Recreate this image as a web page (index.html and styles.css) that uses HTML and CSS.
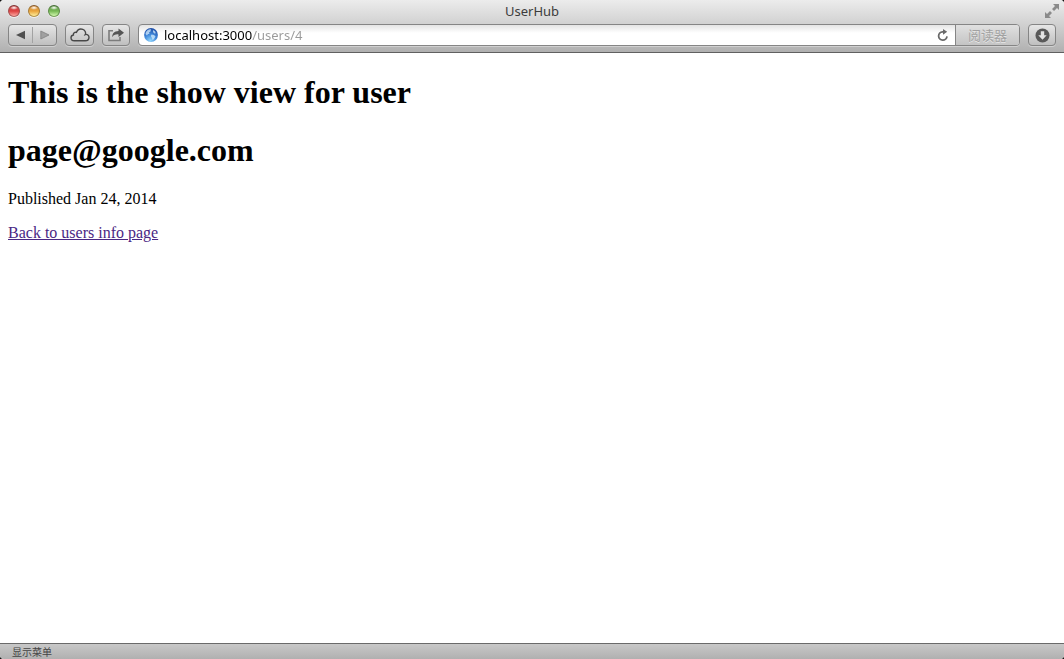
FILE: index.html
```html
<!DOCTYPE html>
<html lang="en">
<head>
<meta charset="utf-8">
<title>UserHub</title>
<link rel="stylesheet" href="styles.css">
</head>
<body>
<div class="window">
  <header class="chrome">
    <div class="titlebar">
      <div class="lights">
        <button class="light red" aria-label="Close"></button>
        <button class="light amber" aria-label="Minimize"></button>
        <button class="light green" aria-label="Zoom"></button>
      </div>
      <div class="title">UserHub</div>
      <button class="fullscreen" aria-label="Full screen">
        <svg width="16" height="16" viewBox="0 0 16 16" fill="#8a8a8a"><path d="M9 1h6v6l-2-2-3 3-2-2 3-3zM1 9l2 2 3-3 2 2-3 3 2 2H1z"/></svg>
      </button>
    </div>
    <div class="toolbar">
      <div class="nav">
        <button class="back" aria-label="Back"><svg width="10" height="10" viewBox="0 0 10 10"><path d="M0 5L9 .8v8.400z" fill="#505050"/></svg></button>
        <button class="forward" aria-label="Forward"><svg width="10" height="10" viewBox="0 0 10 10"><path d="M9 5L.8 1v8z" fill="#a0a0a0" stroke="#808080" stroke-width=".8"/></svg></button>
      </div>
      <button class="btn cloud" aria-label="iCloud tabs"><svg width="20" height="14" viewBox="0 0 20 14" fill="none" stroke="#484848" stroke-width="1.400"><path d="M4.300 12.800C2.300 12.800 1 11.500 1 9.800 1 8.200 2.100 7.200 3.400 7 3.100 5.200 4.700 3.900 6.400 4.400 7.200 2.300 8.800 1 10.900 1c2.700 0 4.700 2 4.800 4.600l-.5 1c2-.8 3.800.800 3.800 2.700 0 2-1.600 3.500-3.800 3.500z"/></svg></button>
      <button class="btn share" aria-label="Share"><svg width="18" height="14" viewBox="0 0 18 14"><path d="M6 2.700H2v9.800h11V9" fill="none" stroke="#7c7c7c" stroke-width="1.600"/><path d="M11.500.5L17 4.700l-5.500 4.200V6.400C8.500 6.200 6.500 7 5.200 9.300 5.200 5.300 7.400 3.100 11.500 3z" fill="#555"/></svg></button>
      <form class="address">
        <svg class="globe" width="14" height="14" viewBox="0 0 14 14">
          <defs><radialGradient id="globe" cx=".45" cy=".9" r=".9"><stop offset="0" stop-color="#8fd4fb"/><stop offset=".5" stop-color="#3f87da"/><stop offset="1" stop-color="#1f4da5"/></radialGradient></defs>
          <circle cx="7" cy="7" r="6.900" fill="url(#globe)"/>
          <path d="M2 4C3 2 5 .900 7 1.200L6.500 3.500 5 4.500 5.500 6 4 6 3 7.500 1.500 6zM9 2l2 1.200.8 2-1.500.3L9 4zM7.500 6.500l2.500.5 1.500 1.500L9.500 11.500 8.500 12 8 10 6.800 8z" fill="#d5ecfc" opacity=".75"/>
        </svg>
        <input class="url" type="text" aria-label="Address" value="localhost:3000/users/4" spellcheck="false">
        <button class="reload" type="button" aria-label="Reload"><svg width="12" height="13" viewBox="0 0 12 13"><path d="M7 2.800H5.500A4.200 4.200 0 1 0 10 7.400" fill="none" stroke="#6a6a6a" stroke-width="1.800"/><path d="M6 0l4.200 2.800L6 5.800z" fill="#6a6a6a"/></svg></button>
        <button class="reader" type="button">阅读器</button>
      </form>
      <button class="btn downloads" aria-label="Downloads"><svg width="15" height="15" viewBox="0 0 15 15"><circle cx="7.500" cy="7.500" r="7" fill="#595959"/><path d="M5.800 3.200h3.400v4h2.500L7.500 11.700 3.300 7.200h2.500z" fill="#e4e4e4"/></svg></button>
    </div>
  </header>
  <main class="page">
    <h1>This is the show view for user</h1>
    <h1>page@google.com</h1>
    <p>Published Jan 24, 2014</p>
    <p><a class="visited" href="#users">Back to users info page</a></p>
  </main>
  <footer class="status">显示菜单</footer>
</div>
</body>
</html>
```
FILE: styles.css
```css
* { box-sizing: border-box; }

body {
  margin: 0;
  background: #111;
}

button {
  margin: 0;
  padding: 0;
  border: 0;
  background: none;
}

svg { display: block; }

.window {
  display: flex;
  flex-direction: column;
  min-height: 100vh;
  overflow: hidden;
  border-radius: 4px;
  background: #fff;
}

.chrome {
  border-bottom: 1px solid #606060;
  background: linear-gradient(#ececec, #d2d2d2 45%, #b0b0b0);
  font-family: "Noto Sans", "Noto Sans CJK SC", sans-serif;
}

.titlebar {
  display: grid;
  grid-template-columns: 1fr auto 1fr;
  align-items: center;
  height: 22px;
  padding: 0 4px;
}

.lights {
  display: flex;
  gap: 8px;
  padding-left: 4px;
}

.light {
  width: 12px;
  height: 12px;
  border: 1px solid;
  border-radius: 50%;
  box-shadow: 0 1px 0 #f0f0f0;
}

.red {
  border-color: #7d3030 #a04a4a #b06060;
  background: radial-gradient(ellipse 4px 2px at 50% 18%, #fff, transparent), linear-gradient(#c85050, #dd4242 50%, #ffa9a2);
}

.amber {
  border-color: #85592a #a57a35 #b5944a;
  background: radial-gradient(ellipse 4px 2px at 50% 18%, #fff, transparent), linear-gradient(#cf8c40, #eaa43c 50%, #fff09c);
}

.green {
  border-color: #446a35 #5a8a45 #76a05a;
  background: radial-gradient(ellipse 4px 2px at 50% 18%, #fff, transparent), linear-gradient(#6c9f55, #76b854 50%, #d4fbb0);
}

.title {
  color: #3c3c3c;
  font-size: 13px;
  line-height: 22px;
}

.fullscreen { justify-self: end; }

.toolbar {
  display: flex;
  gap: 8px;
  height: 30px;
  padding: 2px 8px 6px;
}

.nav,
.btn {
  display: flex;
  align-items: center;
  justify-content: center;
  height: 22px;
  border: 1px solid #858585;
  border-radius: 4px;
  background: linear-gradient(#e6e6e6, #bfbfbf);
  box-shadow: 0 1px 0 #d0d0d0;
}

.btn { width: 28px; }

.nav { width: 49px; }

.back,
.forward {
  display: flex;
  flex: 1;
  align-items: center;
  justify-content: center;
  height: 16px;
}

.forward { border-left: 1px solid #a2a2a2; }

.toolbar .cloud { width: 29px; }

.address {
  display: flex;
  flex: 1;
  align-items: center;
  height: 22px;
  padding-left: 5px;
  overflow: hidden;
  border: 1px solid #858585;
  border-radius: 4px;
  background: linear-gradient(#e4e4e4, #fff 8px);
  box-shadow: 0 1px 0 #d0d0d0;
}

.url {
  flex: 1;
  min-width: 0;
  height: 20px;
  margin-left: 6px;
  padding: 0;
  border: 0;
  outline: 0;
  background: linear-gradient(90deg, #000 88px, #999 88px);
  background-clip: text;
  color: transparent;
  caret-color: #000;
  font: 13px/20px "Noto Sans", sans-serif;
}

.reload { margin-right: 6px; }

.reader {
  width: 64px;
  height: 20px;
  border-left: 1px solid #858585;
  background: linear-gradient(#e0e0e0, #c4c4c4);
  color: #a2a2a2;
  font: 13px/20px "Noto Sans CJK SC", sans-serif;
  text-shadow: 0 1px 0 #e5e5e5;
}

.page {
  flex: 1;
  padding: 0 8px;
  color: #000;
  font: 16px/18px "Liberation Serif", serif;
}

.page h1 {
  margin: 21px 0;
  font-size: 32px;
  line-height: 37px;
}

.page p { margin: 16px 0; }

.visited { color: #4a2784; }

.status {
  height: 16px;
  padding-left: 12px;
  border-top: 1px solid #6a6a6a;
  background: linear-gradient(#c8c8c8, #b0b0b0);
  color: #444;
  font: 10px/15px "Noto Sans CJK SC", sans-serif;
}
```
